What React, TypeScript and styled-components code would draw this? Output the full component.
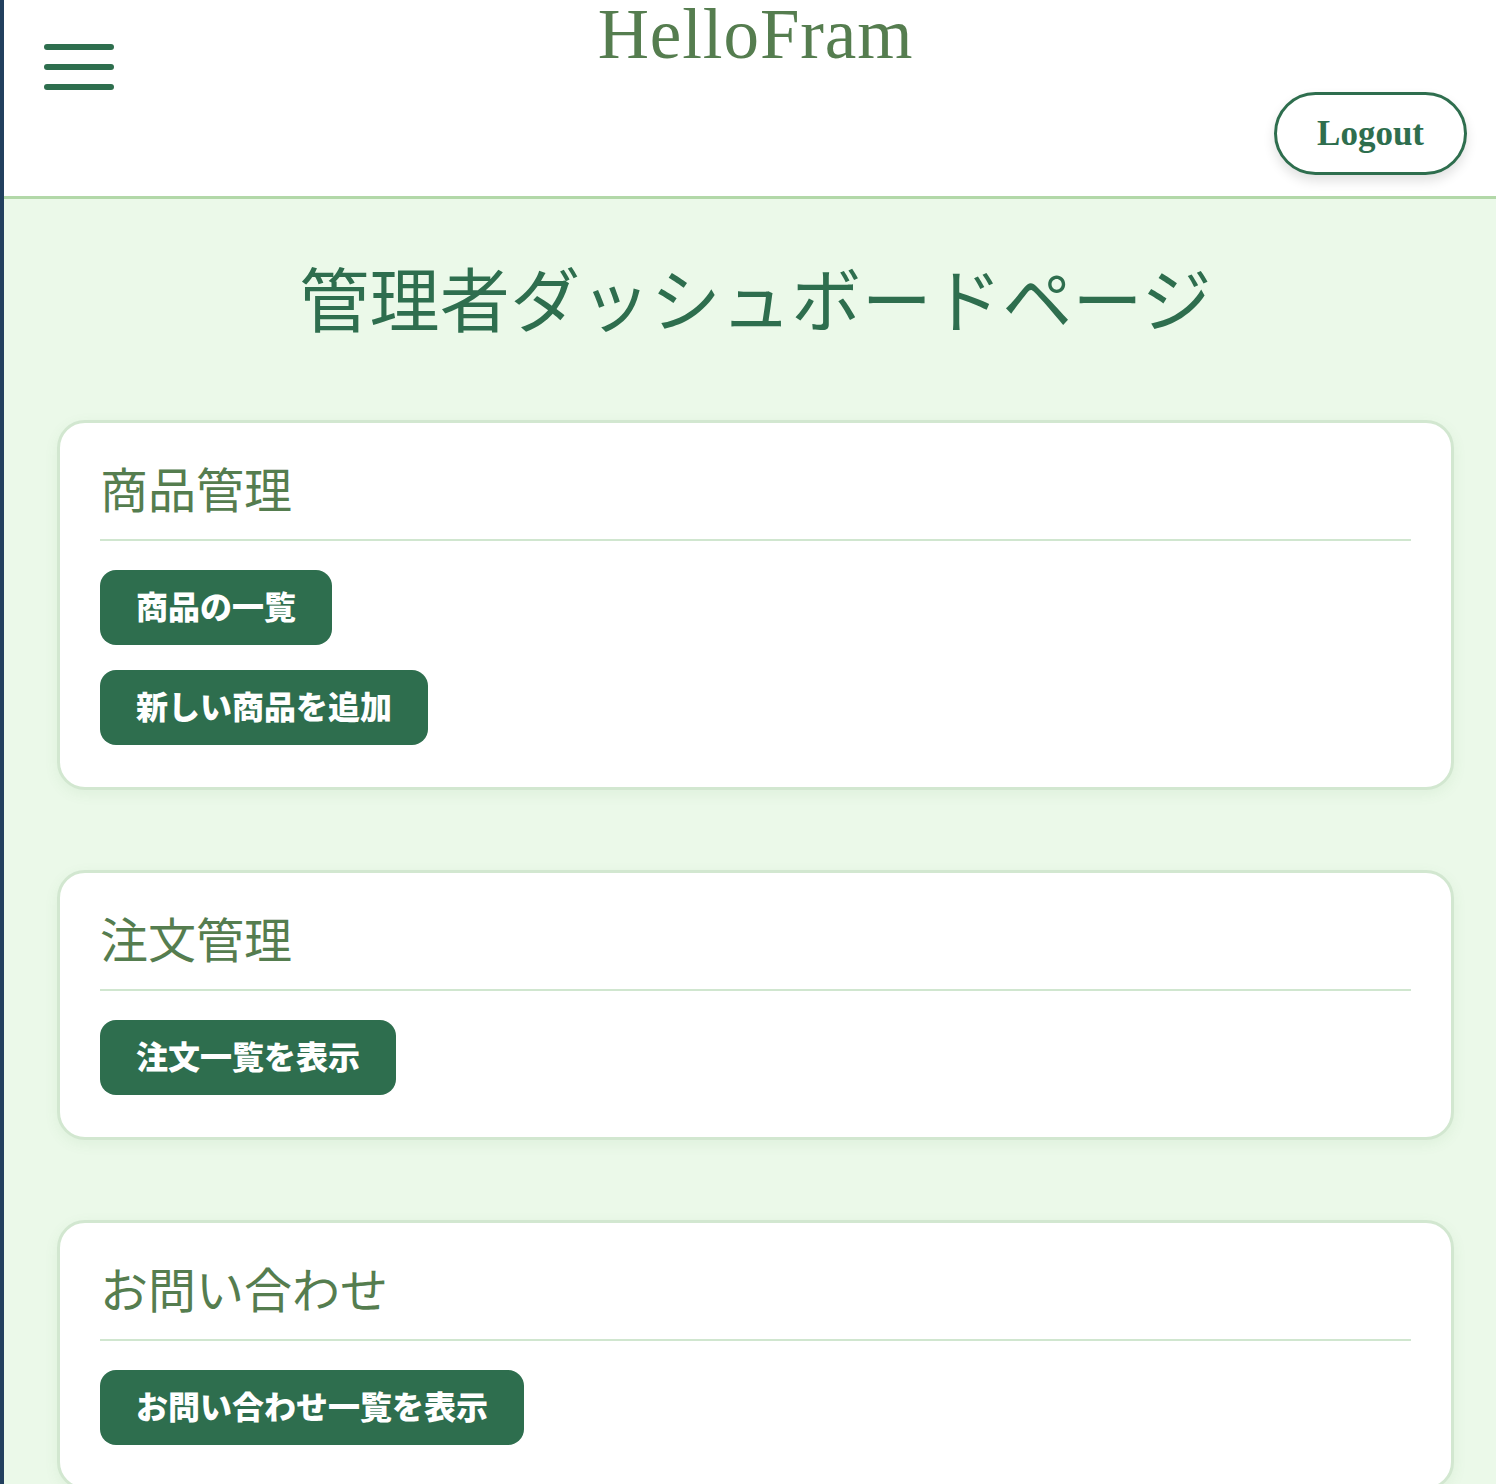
import React from "react";
import styled, { createGlobalStyle } from "styled-components";

const Global = createGlobalStyle`
  html, body { margin: 0; padding: 0; }
  body {
    background: #22405e;
    font-family: "Noto Sans CJK JP", "Noto Sans", sans-serif;
    overflow: hidden;
  }
`;

const Frame = styled.div`
  margin-left: 4px;
  min-height: 1484px;
  background: #ebf9e9;
  border-bottom-left-radius: 12px;
  overflow: hidden;
`;

const Header = styled.header`
  height: 196px;
  background: #ffffff;
  border-bottom: 3px solid #b2d8a8;
  display: grid;
  grid-template-columns: 1fr auto 1fr;
  padding: 0 29px 0 40px;
  box-sizing: content-box;
`;

const Burger = styled.button`
  justify-self: start;
  align-self: start;
  margin-top: 44px;
  padding: 0;
  border: none;
  background: none;
  display: flex;
  flex-direction: column;
  gap: 14px;
  cursor: pointer;
`;

const BurgerLine = styled.span`
  display: block;
  width: 70px;
  height: 6px;
  border-radius: 3px;
  background: #2e6e4e;
`;

const Logo = styled.h1`
  margin: -6px 0 0;
  align-self: start;
  font-family: "Liberation Serif", "DejaVu Serif", serif;
  font-weight: 400;
  font-size: 71px;
  line-height: normal;
  color: #557d4f;
  letter-spacing: 0.9px;
`;

const LogoutButton = styled.button`
  justify-self: end;
  align-self: end;
  margin-bottom: 21px;
  padding: 0 40px;
  height: 83px;
  border: 3px solid #2e6e4e;
  border-radius: 42px;
  background: #ffffff;
  color: #2e6e4e;
  font-family: "Liberation Serif", "DejaVu Serif", serif;
  font-weight: 700;
  font-size: 35px;
  box-shadow: 0 6px 12px rgba(0, 0, 0, 0.12);
  cursor: pointer;
`;

const Main = styled.main`
  padding: 0 42px 60px 53px;
  display: flex;
  flex-direction: column;
`;

const Title = styled.h2`
  margin: 52px 0 0;
  text-align: center;
  font-weight: 400;
  font-size: 70px;
  line-height: 1.3;
  color: #2e6e4e;
  letter-spacing: 0.3px;
`;

const Cards = styled.div`
  margin-top: 78px;
  display: flex;
  flex-direction: column;
  gap: 80px;
`;

const Card = styled.section`
  background: #ffffff;
  border: 3px solid #d2e7d0;
  border-radius: 28px;
  padding: 40px 40px 42px;
  box-shadow: 0 4px 14px rgba(80, 140, 80, 0.08);
`;

const CardHeading = styled.h3`
  margin: 0;
  font-weight: 400;
  font-size: 48px;
  line-height: 48px;
  color: #557d4f;
  padding-bottom: 28px;
  border-bottom: 2px solid #d0e6cf;
`;

const ButtonList = styled.div`
  margin-top: 29px;
  display: flex;
  flex-direction: column;
  align-items: flex-start;
  gap: 25px;
`;

const ActionButton = styled.button`
  height: 75px;
  padding: 0 36px 5px;
  border: none;
  border-radius: 16px;
  background: #2e6e4e;
  color: #ffffff;
  font-family: "Noto Sans CJK JP", "Noto Sans", sans-serif;
  font-weight: 800;
  font-size: 32px;
  cursor: pointer;
`;

const sections = [
  { title: "商品管理", actions: ["商品の一覧", "新しい商品を追加"] },
  { title: "注文管理", actions: ["注文一覧を表示"] },
  { title: "お問い合わせ", actions: ["お問い合わせ一覧を表示"] },
];

export default function App() {
  return (
    <>
      <Global />
      <Frame>
        <Header>
          <Burger aria-label="menu">
            <BurgerLine />
            <BurgerLine />
            <BurgerLine />
          </Burger>
          <Logo>HelloFram</Logo>
          <LogoutButton>Logout</LogoutButton>
        </Header>
        <Main>
          <Title>管理者ダッシュボードページ</Title>
          <Cards>
            {sections.map((s) => (
              <Card key={s.title}>
                <CardHeading>{s.title}</CardHeading>
                <ButtonList>
                  {s.actions.map((a) => (
                    <ActionButton key={a}>{a}</ActionButton>
                  ))}
                </ButtonList>
              </Card>
            ))}
          </Cards>
        </Main>
      </Frame>
    </>
  );
}
